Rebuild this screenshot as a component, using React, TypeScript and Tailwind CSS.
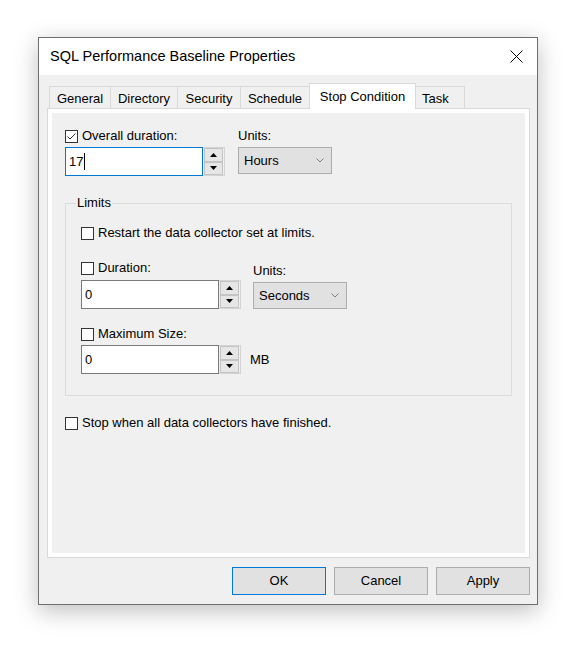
import React from "react"

const font = { fontFamily: '"Liberation Sans", Arial, sans-serif' }

/* ── Small controls ─────────────────────────────────────────────── */
function CheckBox({ checked = false, label }: { checked?: boolean; label: string }) {
  return (
    <label className="flex h-[16px] items-center text-[13px] leading-[16px] text-black">
      <span className="flex h-[13px] w-[13px] shrink-0 items-center justify-center border border-[#333333] bg-white">
        {checked && (
          <svg width="11" height="11" viewBox="0 0 11 11" fill="none">
            <path d="M1.5 5.5 L4 8 L9.5 2.5" stroke="#333333" strokeWidth="1" />
          </svg>
        )}
      </span>
      <span className="ml-[4px]">{label}</span>
    </label>
  )
}

function SpinButton({ dir }: { dir: "up" | "down" }) {
  return (
    <div className="flex h-[14px] items-center justify-center border border-[#c4c4c4] bg-[#e6e6e6]">
      <svg width="7" height="4" viewBox="0 0 7 4">
        {dir === "up" ? <path d="M0 4 L3.5 0 L7 4 Z" fill="#000" /> : <path d="M0 0 L7 0 L3.5 4 Z" fill="#000" />}
      </svg>
    </div>
  )
}

function SpinInput({ value, focused = false }: { value: string; focused?: boolean }) {
  return (
    <div className="flex h-[29px] w-[160px]">
      <div
        className={
          focused
            ? "flex w-[138px] items-center border border-[#0078d7] bg-white pl-[3px] text-[13px] text-black"
            : "flex w-[138px] items-center border border-[#7a7a7a] bg-white pl-[3px] text-[13px] text-black"
        }
      >
        {value}
        {focused && <span className="ml-px h-[17px] w-px bg-black" />}
      </div>
      <div className="flex w-[22px] flex-col justify-center border-y border-r border-[#d4d4d4] bg-[#f0f0f0] px-[1px]">
        <SpinButton dir="up" />
        <SpinButton dir="down" />
      </div>
    </div>
  )
}

function Combo({ value }: { value: string }) {
  return (
    <div className="flex h-[27px] w-[94px] items-center justify-between border border-[#adadad] bg-[#e1e1e1] pl-[5px] pr-[7px] text-[13px] text-black">
      <span>{value}</span>
      <svg width="8" height="5" viewBox="0 0 8 5" fill="none">
        <path d="M0.5 0.5 L4 4 L7.5 0.5" stroke="#808080" strokeWidth="1" />
      </svg>
    </div>
  )
}

function Button({ label, isDefault = false }: { label: string; isDefault?: boolean }) {
  return (
    <button
      className={
        isDefault
          ? "h-[28px] w-[94px] border border-[#0078d7] bg-[#e1e1e1] text-[13px] text-black"
          : "h-[28px] w-[94px] border border-[#adadad] bg-[#e1e1e1] text-[13px] text-black"
      }
    >
      {label}
    </button>
  )
}

/* ── Tabs ───────────────────────────────────────────────────────── */
const tabs = [
  { name: "General", width: "w-[62px]" },
  { name: "Directory", width: "w-[68px]" },
  { name: "Security", width: "w-[64px]" },
  { name: "Schedule", width: "w-[70px]" },
  { name: "Stop Condition", width: "w-[107px]", active: true },
  { name: "Task", width: "w-[50px]", left: true },
]

function TabStrip() {
  return (
    <div className="ml-[2px] flex h-[24px] items-end">
      {tabs.map((t, i) =>
        t.active ? (
          <div
            key={t.name}
            className={`${t.width} relative z-10 -mb-px -ml-px flex h-[26px] items-start justify-center border-x border-t border-[#d9d9d9] bg-white pt-[3px] text-[13px] text-black`}
          >
            {t.name}
          </div>
        ) : (
          <div
            key={t.name}
            className={`${t.width} ${i > 0 ? "-ml-px" : ""} ${
              t.left ? "justify-start pl-[6px]" : "justify-center"
            } flex h-[22px] items-center border-x border-t border-[#d9d9d9] bg-[#f0f0f0] pt-[2px] text-[13px] text-black`}
          >
            {t.name}
          </div>
        )
      )}
    </div>
  )
}

export default function App() {
  return (
    <div className="min-h-screen bg-white pl-[38px] pt-[37px]" style={font}>
      <div className="flex h-[568px] w-[500px] flex-col border border-[#6f6f6f] bg-[#f0f0f0] shadow-[0_6px_22px_rgba(0,0,0,0.25)]">
        {/* Title bar */}
        <div className="flex h-[37px] shrink-0 items-center justify-between bg-white pl-[11px] pr-[14px]">
          <span className="text-[14.5px] text-black">SQL Performance Baseline Properties</span>
          <svg width="13" height="13" viewBox="0 0 13 13">
            <path d="M0.5 0.5 L12.5 12.5 M12.5 0.5 L0.5 12.5" stroke="#000" strokeWidth="1" />
          </svg>
        </div>

        <div className="flex flex-1 flex-col pl-[8px] pr-[7px] pt-[9px]">
          <TabStrip />

          {/* Tab page */}
          <div className="h-[450px] border border-[#d9d9d9] bg-white p-[4px]">
            <div className="h-full bg-[#f0f0f0] pl-[13px] pt-[15px]">
              <div className="flex">
                <div className="w-[160px]">
                  <CheckBox checked label="Overall duration:" />
                  <div className="mt-[3px]">
                    <SpinInput value="17" focused />
                  </div>
                </div>
                <div className="ml-[13px]">
                  <div className="h-[16px] text-[13px] leading-[16px] text-black">Units:</div>
                  <div className="mt-[3px]">
                    <Combo value="Hours" />
                  </div>
                </div>
              </div>

              {/* Limits group */}
              <div className="relative mt-[27px] h-[193px] w-[447px] border border-[#dcdcdc] pl-[15px] pt-[21px]">
                <span className="absolute -top-[9px] left-[10px] bg-[#f0f0f0] px-[1px] text-[13px] leading-[16px] text-black">
                  Limits
                </span>
                <CheckBox label="Restart the data collector set at limits." />
                <div className="mt-[19px] flex">
                  <div className="w-[160px]">
                    <CheckBox label="Duration:" />
                    <div className="mt-[4px]">
                      <SpinInput value="0" />
                    </div>
                  </div>
                  <div className="ml-[12px] pt-[3px]">
                    <div className="h-[16px] text-[13px] leading-[16px] text-black">Units:</div>
                    <div className="mt-[3px]">
                      <Combo value="Seconds" />
                    </div>
                  </div>
                </div>
                <div className="mt-[17px]">
                  <CheckBox label="Maximum Size:" />
                  <div className="mt-[3px] flex items-center">
                    <SpinInput value="0" />
                    <span className="ml-[9px] text-[13px] text-black">MB</span>
                  </div>
                </div>
              </div>

              <div className="mt-[19px]">
                <CheckBox label="Stop when all data collectors have finished." />
              </div>
            </div>
          </div>

          <div className="mt-[9px] flex justify-end gap-2">
            <Button label="OK" isDefault />
            <Button label="Cancel" />
            <Button label="Apply" />
          </div>
        </div>
      </div>
    </div>
  )
}
